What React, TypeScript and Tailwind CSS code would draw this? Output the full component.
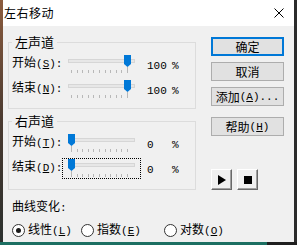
import type { ReactNode } from "react";

const FONT = "font-['Noto_Sans_CJK_SC','Noto_Sans',sans-serif]";

// slider geometry inside the 77x19 drawing area
const TRACK_X = 5;
const TRACK_W = 66;
const MIN_X = 8.5;
const MAX_X = 64.5;

function Slider({ value, focused }: { value: number; focused?: boolean }) {
  const cx = MIN_X + ((MAX_X - MIN_X) * value) / 100;
  const ticks = Array.from({ length: 11 }, (_, i) => Math.round(MIN_X + i * 5.6 - 0.5) + 0.5);
  return (
    <div
      className={`h-[21px] w-[79px] border border-dotted ${focused ? "border-black" : "border-transparent"}`}
    >
      <svg width="77" height="19" viewBox="0 0 77 19">
        <rect x={TRACK_X + 0.5} y="4.5" width={TRACK_W} height="3" fill="#e7e7e7" stroke="#d6d6d6" />
        {ticks.map((t, i) => {
          const underThumb = Math.abs(t - cx) < 2;
          return (
            <line
              key={i}
              x1={t}
              x2={t}
              y1={underThumb ? 12 : 15}
              y2={18}
              stroke="#b8b8b8"
              strokeWidth="1"
            />
          );
        })}
        <polygon
          points={`${cx - 3.5},0 ${cx + 3.5},0 ${cx + 3.5},9 ${cx},12 ${cx - 3.5},9`}
          fill="#0078d7"
        />
      </svg>
    </div>
  );
}

// half-width text, roughly the 6px advance of the original bitmap font
function Mono({ children }: { children: ReactNode }) {
  return <span className="font-['Liberation_Mono',monospace] text-[11px]">{children}</span>;
}

function Key({ k, tail = "" }: { k: string; tail?: string }) {
  return (
    <Mono>
      (<u className="underline-offset-1">{k}</u>){tail}
    </Mono>
  );
}

function SliderRow({
  name,
  k,
  value,
  focused,
}: {
  name: string;
  k: string;
  value: number;
  focused?: boolean;
}) {
  return (
    <div className="flex items-start">
      <span className="w-[50px] text-[12px] leading-[16px] whitespace-nowrap">
        {name}
        <Key k={k} tail=":" />
      </span>
      <Slider value={value} focused={focused} />
      <span className="ml-[6px] w-[25px] leading-[16px]">
        <Mono>{value}</Mono>
      </span>
      <span className="leading-[16px]">
        <Mono>%</Mono>
      </span>
    </div>
  );
}

function Group({ title, children, bottom }: { title: string; children: ReactNode; bottom: string }) {
  return (
    <fieldset className={`border border-[#dcdcdc] pl-[3px] pt-[4px] ${bottom}`}>
      <legend className="px-[3px] text-[13px] leading-[16px]">{title}</legend>
      <div className="flex flex-col gap-[4px]">{children}</div>
    </fieldset>
  );
}

function Button({ children, primary }: { children: ReactNode; primary?: boolean }) {
  return (
    <div
      className={`flex h-[19px] w-[73px] items-center justify-center bg-[#e1e1e1] text-[12px] leading-[16px] whitespace-nowrap ${
        primary ? "border-2 border-[#0078d7]" : "border border-[#adadad]"
      }`}
    >
      {children}
    </div>
  );
}

function MediaButton({ children }: { children: ReactNode }) {
  return (
    <div className="flex h-[21px] w-[21px] items-center justify-center border border-t-white border-l-white border-r-[#696969] border-b-[#696969] bg-[#f0f0f0] shadow-[inset_-1px_-1px_0_#a0a0a0]">
      {children}
    </div>
  );
}

function Radio({ label, k, checked, width }: { label: string; k: string; checked?: boolean; width: string }) {
  return (
    <div className={`flex items-center gap-[3px] ${width}`}>
      <span className="flex h-[13px] w-[13px] items-center justify-center rounded-full border border-[#333333] bg-white">
        {checked && <span className="h-[5px] w-[5px] rounded-full bg-[#1a1a1a]" />}
      </span>
      <span className="text-[12px] leading-[16px] whitespace-nowrap">
        {label}
        <Key k={k} />
      </span>
    </div>
  );
}

export default function App() {
  return (
    <div className={`flex h-[245px] w-[297px] flex-col bg-[#1f1f1f] text-black ${FONT}`}>
      <div className="flex h-[242px]">
        <div className="w-[3px] bg-linear-to-b from-[#8c5c3e] via-[#4a3a30] to-[#2b302e]" />

        <div className="flex w-[291px] flex-col">
          {/* title bar */}
          <div className="flex h-[26px] items-center justify-between bg-white pl-[1px] pr-[10px]">
            <span className="text-[12px] leading-[16px] tracking-[0.5px]">左右移动</span>
            <svg width="10" height="10" viewBox="0 0 10 10">
              <path d="M0.5 0.5 L9.5 9.5 M9.5 0.5 L0.5 9.5" stroke="#000" strokeWidth="1" />
            </svg>
          </div>

          {/* body */}
          <div className="flex flex-1 flex-col bg-[#f0f0f0] px-[5px] pt-[8px]">
            <div className="flex items-start">
              <div className="flex w-[188px] flex-col gap-[4px]">
                <Group title="左声道" bottom="pb-[8px]">
                  <SliderRow name="开始" k="S" value={100} />
                  <SliderRow name="结束" k="N" value={100} />
                </Group>
                <Group title="右声道" bottom="pb-[10px]">
                  <SliderRow name="开始" k="T" value={0} />
                  <SliderRow name="结束" k="D" value={0} focused />
                </Group>
              </div>

              <div className="ml-[15px] mt-[3px] flex flex-col">
                <Button primary>确定</Button>
                <div className="mt-[6px]">
                  <Button>取消</Button>
                </div>
                <div className="mt-[6px]">
                  <Button>
                    添加<Key k="A" tail="..." />
                  </Button>
                </div>
                <div className="mt-[11px]">
                  <Button>
                    帮助<Key k="H" />
                  </Button>
                </div>
                <div className="mt-[33px] flex gap-[5px]">
                  <MediaButton>
                    <svg width="8" height="10" viewBox="0 0 8 10">
                      <polygon points="0,0 8,5 0,10" fill="#000" />
                    </svg>
                  </MediaButton>
                  <MediaButton>
                    <span className="h-[8px] w-[8px] bg-black" />
                  </MediaButton>
                </div>
              </div>
            </div>

            <div className="mt-[8px] pl-[4px] text-[12px] leading-[16px]">
              曲线变化<Mono>:</Mono>
            </div>
            <div className="mt-[5px] flex pl-[4px]">
              <Radio label="线性" k="L" checked width="w-[69px]" />
              <Radio label="指数" k="E" width="w-[83px]" />
              <Radio label="对数" k="O" width="w-[70px]" />
            </div>
          </div>
        </div>

        <div className="w-[3px] bg-[#2b2b2b]" />
      </div>

      <div className="flex h-[3px]">
        <div className="w-[267px] bg-[#1c6f62]" />
        <div className="flex-1 bg-[#1f1f1f]" />
      </div>
    </div>
  );
}
